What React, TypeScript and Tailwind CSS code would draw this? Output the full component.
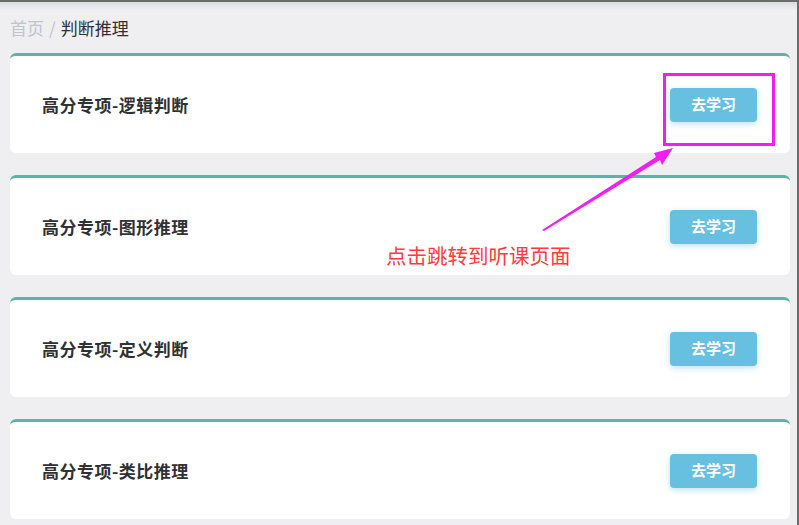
const courses = [
  '高分专项-逻辑判断',
  '高分专项-图形推理',
  '高分专项-定义判断',
  '高分专项-类比推理',
];

function CourseCard({ title }: { title: string }) {
  return (
    <div className="h-[100px] bg-white rounded-md border-t-[3px] border-[#5bb5a6] flex items-center justify-between pl-[32px] pr-[33px]">
      <span className="text-[17px] tracking-[0.5px] font-bold text-[#303133]">{title}</span>
      <button className="w-[87px] h-[34px] rounded bg-[#67c0df] text-white text-[15px] font-bold shadow-[0_2px_6px_rgba(103,192,223,0.45)]">
        去学习
      </button>
    </div>
  );
}

export default function App() {
  return (
    <div
      className="relative w-[799px] h-[525px] overflow-hidden bg-[#efeff2] border-t-2 border-r-2 border-[#6b6b6b]"
      style={{ fontFamily: '"Noto Sans CJK SC", "Noto Sans", sans-serif' }}
    >
      <div className="h-[8px] bg-gradient-to-b from-[#dcdde0] to-[#efeff2]" />
      {/* Breadcrumb */}
      <div className="pl-[10px] h-[38px] text-[17px] leading-[20px] pt-[8px]">
        <span className="text-[#c0c4cc]">首页</span>
        <span className="text-[#c0c4cc] mx-[5px]">/</span>
        <span className="text-[#303133]">判断推理</span>
      </div>

      <div className="flex flex-col gap-[22px] pl-[10px] pr-[7px] pt-[5px]">
        {courses.map((c) => (
          <CourseCard key={c} title={c} />
        ))}
      </div>

      {/* Annotation overlay */}
      <div className="absolute left-[663px] top-[71px] w-[112px] h-[73px] border-[3px] border-[#f01ef0]" />
      <svg className="absolute left-0 top-0" width="799" height="525" viewBox="0 0 799 525">
        <polygon
          points="542,228 656,155 654,151 673,146 662,163 660,158 544,229"
          fill="#f01ef0"
        />
      </svg>
      <span className="absolute left-[386px] top-[240px] text-[20.5px] leading-[26px] text-[#ff3b3b]">
        点击跳转到听课页面
      </span>
    </div>
  );
}
